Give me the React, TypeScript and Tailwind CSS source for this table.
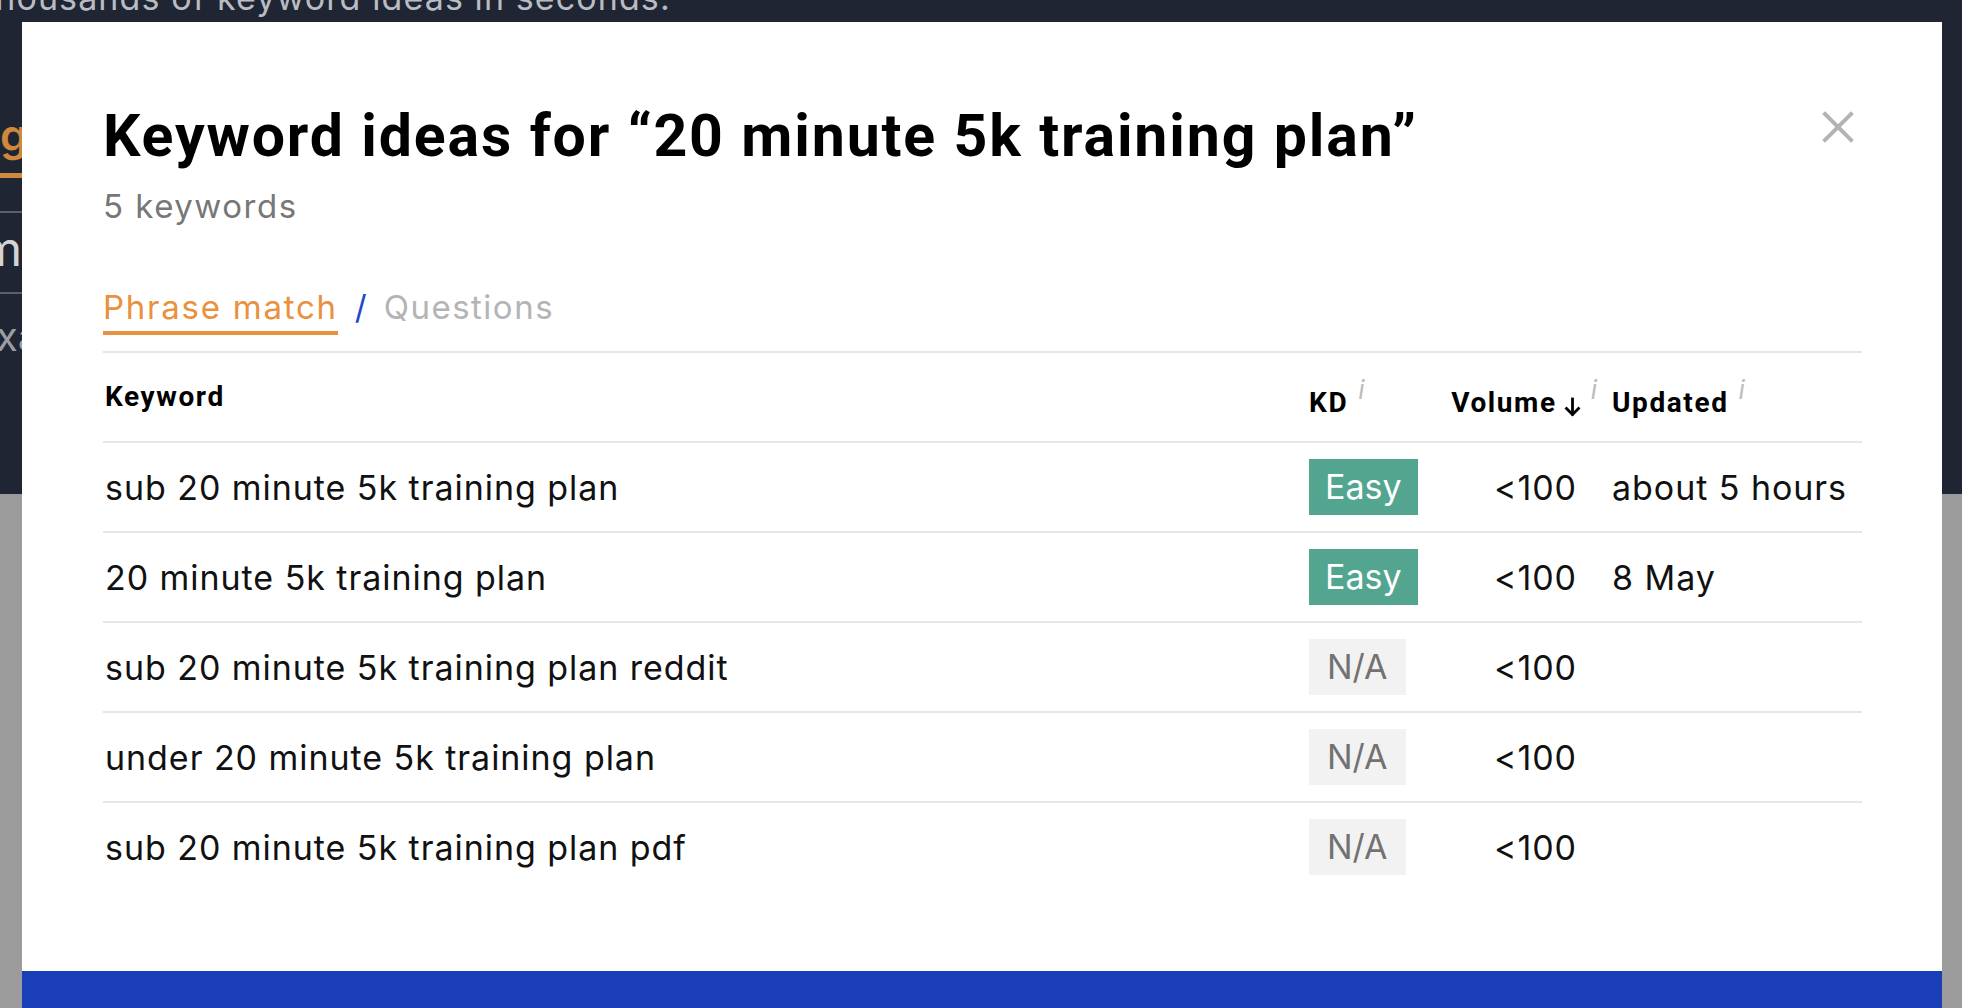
import React from "react";

type Row = { kw: string; kd: "Easy" | "N/A"; vol: string; upd: string };

const rows: Row[] = [
  { kw: "sub 20 minute 5k training plan", kd: "Easy", vol: "<100", upd: "about 5 hours" },
  { kw: "20 minute 5k training plan", kd: "Easy", vol: "<100", upd: "8 May" },
  { kw: "sub 20 minute 5k training plan reddit", kd: "N/A", vol: "<100", upd: "" },
  { kw: "under 20 minute 5k training plan", kd: "N/A", vol: "<100", upd: "" },
  { kw: "sub 20 minute 5k training plan pdf", kd: "N/A", vol: "<100", upd: "" },
];

function Info() {
  return (
    <sup className="ml-[10px] text-[26px] italic font-normal tracking-normal text-[#bdbdbd] font-['Inter',sans-serif]">
      i
    </sup>
  );
}

function DownArrow() {
  return (
    <svg
      width="17"
      height="20"
      viewBox="0 0 17 20"
      className="inline-block align-[-5px] ml-[7px]"
      fill="none"
      stroke="#000"
      strokeWidth="2.8"
      strokeLinecap="square"
    >
      <path d="M8.5 2 V17" />
      <path d="M2.5 11.5 L8.5 17.5 L14.5 11.5" />
    </svg>
  );
}

function KdBadge({ kd }: { kd: Row["kd"] }) {
  if (kd === "Easy") {
    return (
      <span className="flex h-[56px] items-center bg-[#53a590] px-[16px] text-[34px] leading-none tracking-normal text-white">
        Easy
      </span>
    );
  }
  return (
    <span className="flex h-[56px] items-center bg-[#f2f2f2] px-[18px] text-[34px] leading-none tracking-normal text-[#727272]">
      N/A
    </span>
  );
}

export default function App() {
  return (
    <div className="relative h-[1008px] w-[1962px] overflow-hidden font-['Inter',sans-serif]">
      {/* page behind the dialog */}
      <div className="h-[494px] overflow-hidden bg-[#1f2533]">
        <p className="-ml-[17px] -mt-[23px] whitespace-nowrap text-[34px] leading-[41px] tracking-[1.1px] text-[#b9bcc3]">
          thousands of keyword ideas in seconds.
        </p>
        <div className="flex w-[22px] flex-col overflow-hidden">
          <span className="mt-[95px] text-[44px] font-semibold leading-[44px] text-[#cf883c]">g</span>
          <span className="mt-[16px] h-[5px] w-[22px] bg-[#cf883c]" />
          <span className="mt-[33px] h-[2px] w-[22px] bg-[#5b5f69]" />
          <span className="-ml-[20px] mt-[12px] text-[48px] leading-[48px] text-[#d3d4d7]">m</span>
          <span className="mt-[19px] h-[2px] w-[22px] bg-[#5b5f69]" />
          <span className="-ml-[4px] mt-[23px] text-[40px] leading-[40px] text-[#9a9da4]">xa</span>
        </div>
      </div>
      <div className="h-[514px] bg-[#9b9b9b]" />

      {/* dialog */}
      <div className="absolute left-[22px] top-[22px] flex h-[986px] w-[1920px] flex-col overflow-hidden bg-white">
        <button className="absolute right-[88px] top-[89px] h-[32px] w-[32px]" aria-label="Close">
          <svg width="32" height="32" viewBox="0 0 32 32" stroke="#b3b3b3" strokeWidth="4" strokeLinecap="square">
            <path d="M3 3 L29 29" />
            <path d="M29 3 L3 29" />
          </svg>
        </button>

        <div className="pl-[81px] pr-[80px] pt-[79px]">
          <h1 className="whitespace-nowrap font-[Roboto,sans-serif] text-[59px] font-bold leading-[70px] tracking-[1.85px] text-black">
            Keyword ideas for “20 minute 5k training plan”
          </h1>
          <p className="mt-[15px] text-[33px] leading-[40px] tracking-[1.5px] text-[#777777]">5 keywords</p>

          <div className="mt-[61px] flex items-start gap-[17px] text-[33px] leading-[40px]">
            <span className="border-b-4 border-[#e8913e] pb-[4px] tracking-[1.75px] text-[#e8913e]">Phrase match</span>
            <span className="text-[#2148c8]">/</span>
            <span className="tracking-[1.5px] text-[#b4b4b4]">Questions</span>
          </div>

          <div className="mt-[16px] border-t-2 border-[#e6e6e6]">
            <div className="grid h-[88px] grid-cols-[1206px_141px_127px_285px] font-[Roboto,sans-serif] text-[28px] font-bold tracking-[1.6px] text-black">
              <div className="flex items-center pl-[2px]">Keyword</div>
              <div className="flex items-center pt-[10px]">
                <span className="leading-[33px]">
                  KD
                  <Info />
                </span>
              </div>
              <div className="flex items-center justify-end pt-[10px]">
                <span className="whitespace-nowrap leading-[33px]">
                  Volume
                  <DownArrow />
                  <span className="-mr-[20px]">
                    <Info />
                  </span>
                </span>
              </div>
              <div className="flex items-center pl-[35px] pt-[10px]">
                <span className="whitespace-nowrap leading-[33px]">
                  Updated
                  <Info />
                </span>
              </div>
            </div>

            {rows.map((r) => (
              <div
                key={r.kw}
                className="grid h-[90px] grid-cols-[1206px_141px_127px_285px] border-t-2 border-[#e6e6e6] text-[34px] tracking-[0.95px] text-[#111111]"
              >
                <div className="flex items-center whitespace-nowrap pl-[2px]">{r.kw}</div>
                <div className="flex items-center">
                  <KdBadge kd={r.kd} />
                </div>
                <div className="flex items-center justify-end">{r.vol}</div>
                <div className="flex items-center whitespace-nowrap pl-[35px]">{r.upd}</div>
              </div>
            ))}
          </div>
        </div>

        <div className="mt-auto h-[37px] bg-[#1a3eb7]" />
      </div>
    </div>
  );
}
